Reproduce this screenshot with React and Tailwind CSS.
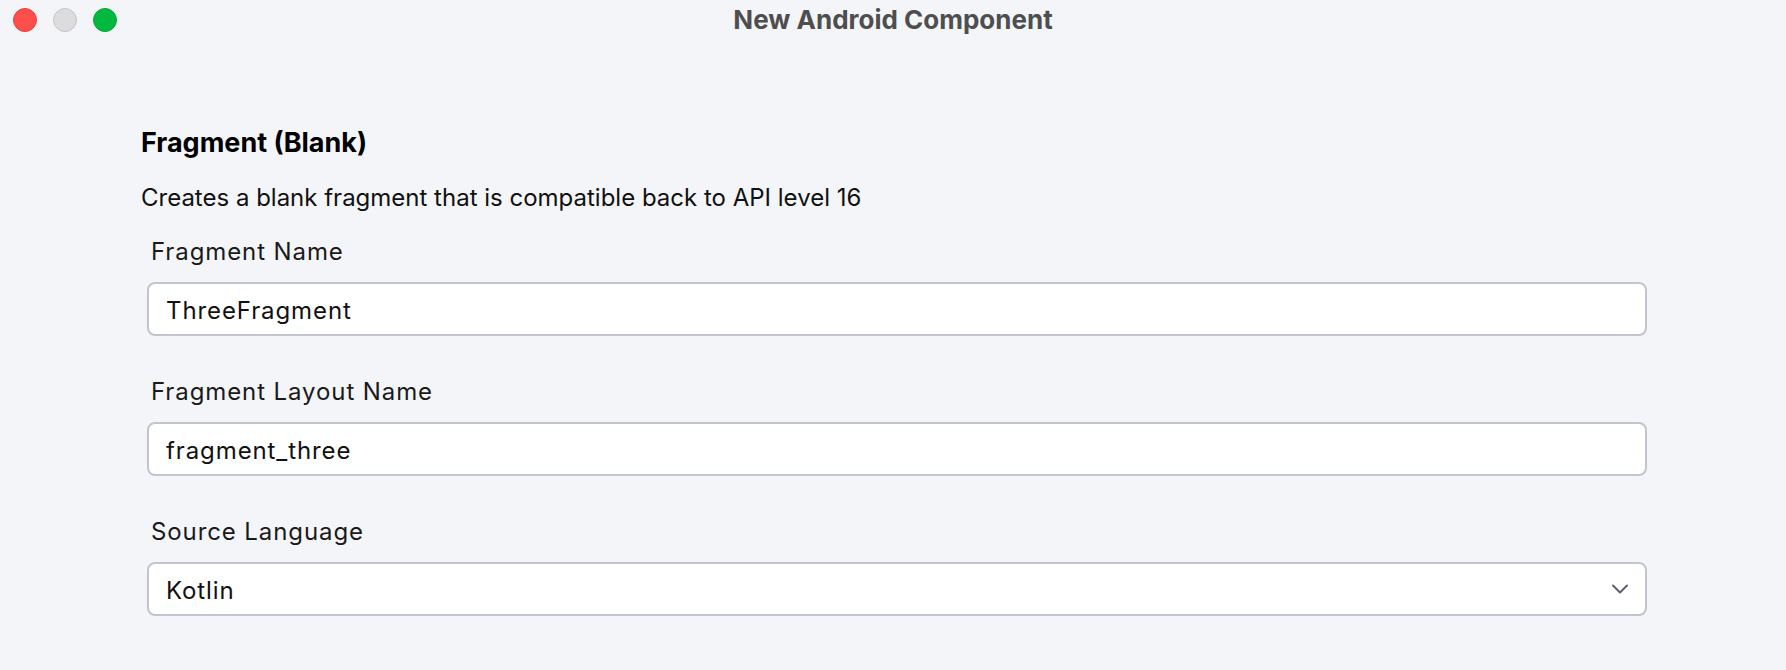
const Chevron = () => (
  <svg width="18" height="12" viewBox="0 0 18 12" fill="none" className="text-[#5b6070]">
    <polyline points="2,2.5 9,9.5 16,2.5" stroke="currentColor" strokeWidth="2" strokeLinecap="round" strokeLinejoin="round" />
  </svg>
);

const Field = ({ label, value, select }) => (
  <div className="flex flex-col">
    <label className="ml-[10px] h-[32px] text-[24px] leading-[32px] tracking-[0.9px] text-[#1a1a1a]">{label}</label>
    <div className="mt-[14px] ml-[6px] w-[1500px] h-[54px] flex items-center justify-between rounded-[8px] border-2 border-[#c3c5ce] bg-white pl-[17px] pr-[16px]">
      <span className="pt-[3px] text-[24px] tracking-[0.9px] text-[#111]">{value}</span>
      {select && <Chevron />}
    </div>
  </div>
);

const App = () => {
  return (
    <div className="w-[1786px] h-[670px] bg-[#f4f5f9] overflow-hidden font-['Inter','Noto_Sans',sans-serif]">
      {/* Title bar */}
      <div className="relative h-[40px] flex items-center justify-center">
        <div className="absolute left-[13px] top-[8px] flex gap-[16px]">
          <span className="w-[24px] h-[24px] rounded-full bg-[#ff4e4b] border border-[#e8403d]" />
          <span className="w-[24px] h-[24px] rounded-full bg-[#dcdcde] border border-[#c6c6c8]" />
          <span className="w-[24px] h-[24px] rounded-full bg-[#02b83e] border border-[#03a838]" />
        </div>
        <span className="pb-[2px] text-[26px] font-bold text-[#4e4e4e]">New Android Component</span>
      </div>

      {/* Content */}
      <div className="pl-[141px] pt-[87px]">
        <h1 className="text-[27px] leading-[32px] font-bold text-black">Fragment (Blank)</h1>
        <p className="mt-[23px] text-[24px] leading-[32px] text-[#111]">
          Creates a blank fragment that is compatible back to API level 16
        </p>
        <div className="mt-[22px] flex flex-col gap-[40px]">
          <Field label="Fragment Name" value="ThreeFragment" />
          <Field label="Fragment Layout Name" value="fragment_three" />
          <Field label="Source Language" value="Kotlin" select />
        </div>
      </div>
    </div>
  );
};

export default App;
